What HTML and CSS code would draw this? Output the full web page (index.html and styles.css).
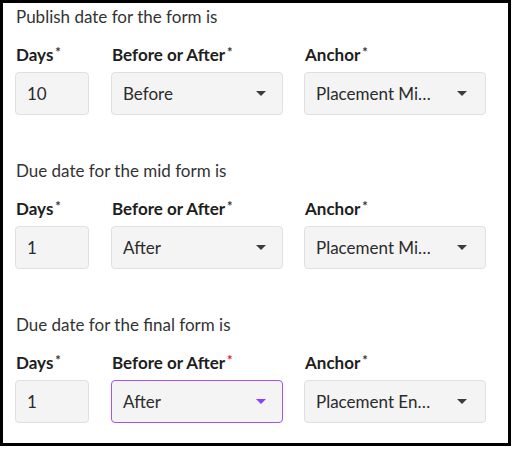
FILE: index.html
```html
<!DOCTYPE html>
<html lang="en">
<head>
<meta charset="utf-8">
<title>Form dates</title>
<link rel="stylesheet" href="styles.css">
</head>
<body>
<div class="frame">
  <section class="block">
    <p class="intro">Publish date for the form is</p>
    <div class="fields">
      <div class="field">
        <div class="label">Days<span class="req">*</span></div>
        <div class="box days">10</div>
      </div>
      <div class="field">
        <div class="label">Before or After<span class="req">*</span></div>
        <div class="box select ba"><span class="val">Before</span><svg class="caret" width="10" height="5" viewBox="0 0 10 5"><path d="M0 0h10L5 5z"/></svg></div>
      </div>
      <div class="field">
        <div class="label">Anchor<span class="req">*</span></div>
        <div class="box select anchor"><span class="val">Placement Mi…</span><svg class="caret" width="10" height="5" viewBox="0 0 10 5"><path d="M0 0h10L5 5z"/></svg></div>
      </div>
    </div>
  </section>
  <section class="block block-mid">
    <p class="intro">Due date for the mid form is</p>
    <div class="fields">
      <div class="field">
        <div class="label">Days<span class="req">*</span></div>
        <div class="box days">1</div>
      </div>
      <div class="field">
        <div class="label">Before or After<span class="req">*</span></div>
        <div class="box select ba"><span class="val">After</span><svg class="caret" width="10" height="5" viewBox="0 0 10 5"><path d="M0 0h10L5 5z"/></svg></div>
      </div>
      <div class="field">
        <div class="label">Anchor<span class="req">*</span></div>
        <div class="box select anchor"><span class="val">Placement Mi…</span><svg class="caret" width="10" height="5" viewBox="0 0 10 5"><path d="M0 0h10L5 5z"/></svg></div>
      </div>
    </div>
  </section>
  <section class="block">
    <p class="intro">Due date for the final form is</p>
    <div class="fields">
      <div class="field">
        <div class="label">Days<span class="req">*</span></div>
        <div class="box days">1</div>
      </div>
      <div class="field">
        <div class="label">Before or After<span class="req req-active">*</span></div>
        <div class="box select ba focused"><span class="val">After</span><svg class="caret" width="10" height="5" viewBox="0 0 10 5"><path d="M0 0h10L5 5z"/></svg></div>
      </div>
      <div class="field">
        <div class="label">Anchor<span class="req">*</span></div>
        <div class="box select anchor"><span class="val">Placement En…</span><svg class="caret" width="10" height="5" viewBox="0 0 10 5"><path d="M0 0h10L5 5z"/></svg></div>
      </div>
    </div>
  </section>
</div>
</body>
</html>
```

FILE: styles.css
```css
html, body {
  margin: 0;
  padding: 0;
  background: #fff;
}

body {
  font-family: Lato, "Noto Sans", sans-serif;
  font-size: 17px;
  color: #333;
}

.frame {
  box-sizing: border-box;
  width: 511px;
  height: 446px;
  border: 3px solid #000;
  padding: 4px 12px 0 12px;
}

.block {
  margin-bottom: 46px;
}

.intro {
  margin: 0 0 18px 1px;
  line-height: 20px;
  height: 20px;
  color: #333;
}

.fields {
  display: grid;
  grid-template-columns: 96px 193px 182px;
}

.label {
  font-weight: 700;
  line-height: 20px;
  height: 20px;
  color: #1e1e1e;
  margin: 0 0 7px 1px;
  white-space: nowrap;
}

.req {
  font-size: 13px;
  line-height: 0;
  vertical-align: 4px;
  margin-left: 2px;
  color: #333;
}

.req-active {
  color: #da1e28;
}

.box {
  box-sizing: border-box;
  height: 43px;
  background: #f4f4f4;
  border: 1px solid #e0e0e0;
  border-radius: 4px;
  padding: 0 11px;
  display: flex;
  align-items: center;
  color: #2b2b2b;
}

.days {
  width: 74px;
}

.ba {
  width: 172px;
}

.anchor {
  width: 182px;
}

.select {
  justify-content: space-between;
  padding-right: 16px;
}

.anchor {
  padding-right: 18px;
}

.val {
  white-space: nowrap;
}

.caret {
  flex: none;
  fill: #3c3c3c;
}

.focused {
  border-color: #a451f7;
}

.focused .caret {
  fill: #8a3ffc;
}
```
